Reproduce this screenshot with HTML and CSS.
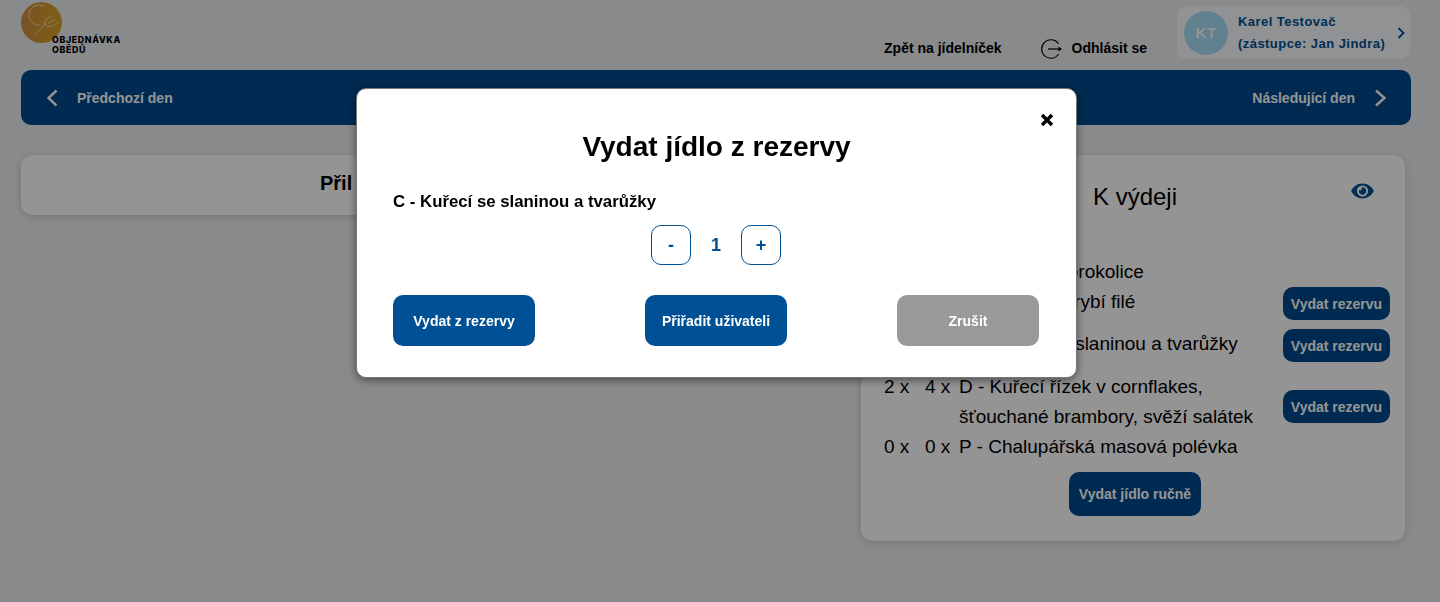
FILE: index.html
```html
<!DOCTYPE html>
<html lang="cs">
<head>
  <meta charset="UTF-8" />
  <meta name="viewport" content="width=device-width, initial-scale=1.0"/>
  <title>Objednávka obědů</title>
  <link rel="stylesheet" href="styles.css">
</head>
<body>
  <header class="top-bar">
    <div class="logo">
      <svg class="logo-mark" width="41" height="45" viewBox="0 0 41 45">
        <defs>
          <linearGradient id="gold" x1="0" y1="0" x2="1" y2="0">
            <stop offset="0" stop-color="#d08f40"/>
            <stop offset="1" stop-color="#dba324"/>
          </linearGradient>
        </defs>
        <circle cx="20.5" cy="24.5" r="20.5" fill="url(#gold)"/>
        <path d="M23 8.500A10 10 0 1 0 19.500 27" fill="none" stroke="#f0d9ae" stroke-width="1"/>
        <path d="M14 37l11-12M24.700 22l6-5M27.300 25.300l6.700-4M30 28.700l6.700-4M24.700 22q-2 3-.5 4.500 2.500 3 5.800 2.200" fill="none" stroke="#f0d9ae" stroke-width="1"/>
      </svg>
      <div class="logo-text">OBJEDNÁVKA<br>OBĚDŮ</div>
    </div>
    <a class="top-link">Zpět na jídelníček</a>
    <a class="top-link logout">
      <svg class="logout-icon" width="22" height="20" viewBox="0 0 22 20">
        <path d="M17.600 4.700a9.300 9.300 0 1 0 0 10.600" fill="none" stroke="#000" stroke-width="1.100"/>
        <path d="M7 10h12" fill="none" stroke="#000" stroke-width="1.200"/>
        <path d="M17.500 7.500l3.500 2.500-3.500 2.500z"/>
      </svg>
      Odhlásit se
    </a>
    <div class="user-chip">
      <div class="avatar">KT</div>
      <div class="user-name">Karel Testovač<br>(zástupce: Jan Jindra)</div>
      <svg width="8" height="12" viewBox="0 0 8 12">
        <path d="M1.500 1l5 5-5 5" fill="none" stroke="#005095" stroke-width="1.800"/>
      </svg>
    </div>
  </header>

  <nav class="day-nav">
    <a class="day-link">
      <svg width="12" height="18" viewBox="0 0 12 18"><path d="M10.500 1.500L2.500 9l8 7.500" fill="none" stroke="#fff" stroke-width="2.400"/></svg>
      Předchozí den
    </a>
    <a class="day-link">
      Následující den
      <svg width="13" height="18" viewBox="0 0 13 18"><path d="M2 1.500L10.500 9 2 16.500" fill="none" stroke="#fff" stroke-width="2.400"/></svg>
    </a>
  </nav>

  <main class="content">
    <section class="card card-left">Přil</section>
    <section class="card card-right">
      <div class="card-head">
        <h2>K výdeji</h2>
        <svg class="eye" width="23" height="20" viewBox="0 0 576 512">
          <path fill="#005095" d="M572.52 241.4C518.29 135.59 410.93 64 288 64S57.68 135.64 3.48 241.41a32.35 32.35 0 0 0 0 29.19C57.71 376.41 165.07 448 288 448s230.32-71.64 284.52-177.41a32.35 32.35 0 0 0 0-29.19zM288 400a144 144 0 1 1 144-144 143.93 143.93 0 0 1-144 144zm0-240a95.31 95.31 0 0 0-25.31 3.79 47.85 47.85 0 0 1-66.9 66.9A95.78 95.78 0 1 0 288 160z"/>
        </svg>
      </div>
      <div class="row">
        <span>1 x</span><span>2 x</span><span class="meal">A - Vepřové, brokolice</span>
      </div>
      <div class="row">
        <span>1 x</span><span>2 x</span><span class="meal">B - Smažené rybí filé</span>
        <button class="btn-reserve">Vydat rezervu</button>
      </div>
      <div class="row row-c">
        <span>1 x</span><span>2 x</span><span class="meal">C - Kuřecí se slaninou a tvarůžky</span>
        <button class="btn-reserve">Vydat rezervu</button>
      </div>
      <div class="row row-tall">
        <span>2 x</span><span>4 x</span><span class="meal">D - Kuřecí řízek v cornflakes, šťouchané brambory, svěží salátek</span>
        <button class="btn-reserve">Vydat rezervu</button>
      </div>
      <div class="row">
        <span>0 x</span><span>0 x</span><span class="meal">P - Chalupářská masová polévka</span>
      </div>
      <button class="btn-manual">Vydat jídlo ručně</button>
    </section>
  </main>

  <div class="overlay">
    <div class="modal">
      <svg class="close" width="14" height="14" viewBox="0 0 14 14">
        <path d="M2 2l10 10M12 2L2 12" fill="none" stroke="#000" stroke-width="3.400"/>
      </svg>
      <h1>Vydat jídlo z rezervy</h1>
      <p class="modal-meal">C - Kuřecí se slaninou a tvarůžky</p>
      <div class="stepper">
        <button class="step">-</button>
        <span class="step-value">1</span>
        <button class="step">+</button>
      </div>
      <div class="modal-actions">
        <button class="btn">Vydat z rezervy</button>
        <button class="btn">Přiřadit uživateli</button>
        <button class="btn btn-grey">Zrušit</button>
      </div>
    </div>
  </div>
</body>
</html>
```

FILE: styles.css
```css
body {
  margin: 0;
  height: 602px;
  overflow: hidden;
  font-family: "Liberation Sans", Arial, sans-serif;
  background-color: #edeef1;
  color: #000;
}
button {
  font-family: inherit;
  cursor: pointer;
}

/* header */
.top-bar {
  display: flex;
  height: 70px;
  padding: 0 30px 0 21px;
  box-sizing: border-box;
}
.logo {
  display: flex;
  margin-right: auto;
}
.logo-mark {
  margin-top: -2px;
}
.logo-text {
  margin: 35px 0 0 -10px;
  font-family: Inter, "Liberation Sans", sans-serif;
  font-size: 8.8px;
  font-weight: 800;
  line-height: 10px;
  letter-spacing: 0.65px;
}
.top-link {
  display: flex;
  align-items: center;
  gap: 9px;
  height: 20px;
  margin-top: 38px;
  margin-right: 39px;
  font-size: 14px;
  font-weight: bold;
}
.logout {
  margin-right: 30px;
}
.logout-icon {
  margin-top: 2px;
}
.user-chip {
  display: flex;
  align-items: center;
  width: 233px;
  height: 53px;
  margin-top: 6px;
  padding: 0 5px 0 7px;
  box-sizing: border-box;
  background: #fafbfd;
  border-radius: 10px;
}
.avatar {
  display: flex;
  align-items: center;
  justify-content: center;
  flex: none;
  width: 44px;
  height: 44px;
  border-radius: 50%;
  background: #a7def5;
  color: #fff;
  font-size: 15px;
  font-weight: bold;
  letter-spacing: 0.5px;
}
.user-name {
  flex: 1;
  margin-left: 10px;
  color: #005095;
  font-size: 13px;
  font-weight: bold;
  line-height: 22px;
  letter-spacing: 0.45px;
}

/* day switch */
.day-nav {
  display: flex;
  justify-content: space-between;
  align-items: center;
  height: 55px;
  margin: 0 29px 0 21px;
  padding: 0 24px 0 25px;
  background: #00498c;
  border-radius: 10px;
}
.day-link {
  display: flex;
  align-items: center;
  gap: 19px;
  color: #fff;
  font-size: 14px;
  font-weight: bold;
}

/* cards */
.content {
  display: flex;
  align-items: flex-start;
  gap: 16px;
  padding: 30px 35px 0 21px;
}
.card {
  background: #fff;
  border-radius: 12px;
  box-shadow: 0 2px 10px rgba(0, 0, 0, 0.15);
  box-sizing: border-box;
}
.card-left {
  width: 824px;
  height: 60px;
  padding: 17px 0 0 299px;
  font-size: 20px;
  font-weight: bold;
}
.card-right {
  display: flex;
  flex-direction: column;
  width: 544px;
  height: 386px;
  padding-left: 23px;
}
.card-head {
  display: flex;
  justify-content: space-between;
  flex: none;
  height: 102px;
  padding: 28px 31px 0 209px;
  box-sizing: border-box;
}
.card-head h2 {
  margin: 0;
  font-size: 24px;
  font-weight: normal;
  line-height: 28px;
}
.eye {
  margin-top: -2px;
}
.row {
  display: grid;
  grid-template-columns: 41px 34px 324px 107px;
  align-items: start;
  font-size: 19px;
  line-height: 30px;
}
.row-c {
  margin-top: 9px;
}
.row-tall {
  margin-top: 10px;
}
.row-tall .btn-reserve {
  margin-top: 18px;
}
.btn-reserve {
  grid-column: 4;
  height: 33px;
  padding: 0;
  border: none;
  border-radius: 10px;
  background: #00498c;
  color: #fff;
  font-size: 14px;
  font-weight: bold;
}
.btn-manual {
  align-self: flex-start;
  width: 132px;
  height: 44px;
  margin: 10px 0 0 185px;
  padding: 0;
  border: none;
  border-radius: 10px;
  background: #00498c;
  color: #fff;
  font-size: 14px;
  font-weight: bold;
}
.meal {
  width: 300px;
}

/* modal */
.overlay {
  position: fixed;
  inset: 0;
  padding: 88px 0 0 356px;
  background: rgba(0, 0, 0, 0.42);
}
.modal {
  position: relative;
  width: 721px;
  height: 290px;
  padding: 0 36px;
  box-sizing: border-box;
  background: #fff;
  border: 1px solid #777;
  border-radius: 10px;
  box-shadow: 0 2px 8px rgba(0, 0, 0, 0.5);
}
.close {
  position: absolute;
  top: 24px;
  right: 22px;
}
.modal h1 {
  margin: 0;
  padding-top: 42px;
  font-size: 28px;
  line-height: 32px;
  text-align: center;
}
.modal-meal {
  margin: 29px 0 0;
  font-size: 16.8px;
  font-weight: bold;
  line-height: 20px;
}
.stepper {
  display: flex;
  justify-content: center;
  align-items: center;
  height: 40px;
  margin-top: 13px;
  padding-right: 1px;
}
.step {
  width: 40px;
  height: 40px;
  padding: 0;
  border: 1px solid #005095;
  border-radius: 10px;
  background: #fff;
  color: #005095;
  font-size: 18px;
  font-weight: bold;
}
.step-value {
  width: 50px;
  color: #005095;
  font-size: 18px;
  font-weight: bold;
  text-align: center;
}
.modal-actions {
  display: flex;
  justify-content: space-between;
  margin-top: 30px;
  padding-right: 1px;
}
.btn {
  width: 142px;
  height: 51px;
  padding: 0;
  border: none;
  border-radius: 10px;
  background: #005095;
  color: #fff;
  font-size: 14px;
  font-weight: bold;
}
.btn-grey {
  background: #999;
}
```
